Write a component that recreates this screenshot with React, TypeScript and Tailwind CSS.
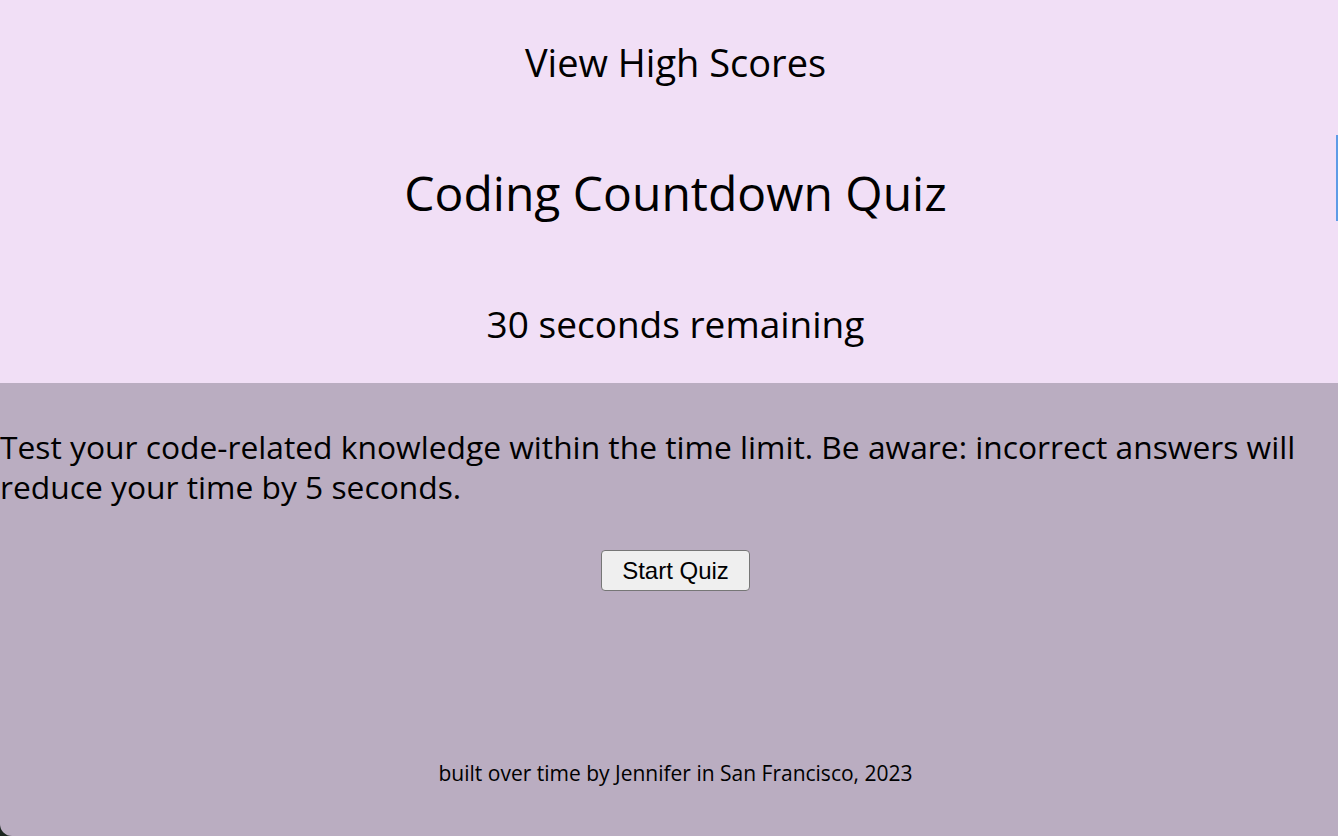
const font = "font-['Open_Sans','Noto_Sans',sans-serif]";

export default function App() {
  return (
    <div className="min-h-[836px] bg-[#1c2620]">
      <main
        className={`relative flex min-h-[836px] flex-col overflow-hidden rounded-bl-[12px] text-black ${font}`}
      >
        <header className="flex flex-col items-center bg-[#f1dff6] pb-[32px] pl-[13px] pt-[35px]">
          <a className="h-[54px] text-[38px] leading-[54px]">View High Scores</a>
          <h1 className="mt-[68px] h-[72px] text-[48px] leading-[72px]">
            Coding Countdown Quiz
          </h1>
          <p className="mt-[68px] h-[54px] text-[37px] leading-[54px]">
            30 seconds remaining
          </p>
        </header>

        <section className="flex flex-1 flex-col bg-[#baadc1] pt-[44px]">
          <p className="text-[31.75px] leading-[40px]">
            Test your code-related knowledge within the time limit. Be aware:
            incorrect answers will reduce your time by 5 seconds.
          </p>
          <div className="mt-[43px] flex justify-center pl-[13px]">
            <button className="h-[41px] rounded-[4px] border border-[#767676] bg-[#efefef] px-[20px] font-['Liberation_Sans',Arial,sans-serif] text-[24px] leading-[28px]">
              Start Quiz
            </button>
          </div>
          <footer className="mt-[167px] pl-[13px] text-center text-[21px] leading-[30px]">
            built over time by Jennifer in San Francisco, 2023
          </footer>
        </section>

        <div className="absolute right-0 top-[135px] h-[86px] w-[2px] bg-[#5e9be6]" />
      </main>
    </div>
  );
}
